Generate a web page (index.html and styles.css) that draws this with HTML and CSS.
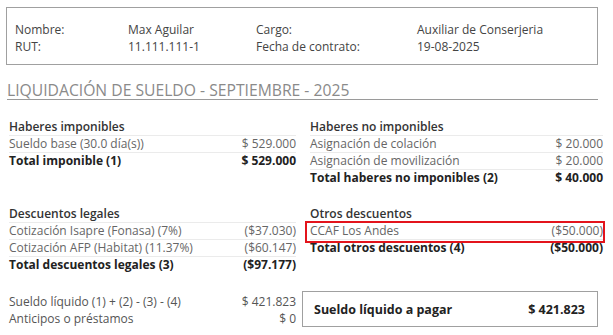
FILE: index.html
```html
<!DOCTYPE html>
<html lang="es">
<head>
<meta charset="utf-8">
<link rel="stylesheet" href="styles.css">
</head>
<body>
<div class="page">
  <div class="info">
    <div class="info-row">
      <span class="c1">Nombre:</span><span class="c2">Max Aguilar</span><span class="c3">Cargo:</span><span class="c4">Auxiliar de Conserjeria</span>
    </div>
    <div class="info-row">
      <span class="c1">RUT:</span><span class="c2">11.111.111-1</span><span class="c3">Fecha de contrato:</span><span class="c4">19-08-2025</span>
    </div>
  </div>

  <h1 class="title">LIQUIDACIÓN DE SUELDO - SEPTIEMBRE - 2025</h1>

  <div class="grid">
    <div class="block">
      <div class="row head">Haberes imponibles</div>
      <div class="row item"><span>Sueldo base (30.0 día(s))</span><span>$ 529.000</span></div>
      <div class="row total"><span>Total imponible (1)</span><span>$ 529.000</span></div>
    </div>
    <div class="block">
      <div class="row head">Haberes no imponibles</div>
      <div class="row item"><span>Asignación de colación</span><span>$ 20.000</span></div>
      <div class="row item"><span>Asignación de movilización</span><span>$ 20.000</span></div>
      <div class="row total"><span>Total haberes no imponibles (2)</span><span>$ 40.000</span></div>
    </div>
    <div class="block">
      <div class="row head">Descuentos legales</div>
      <div class="row item"><span>Cotización Isapre (Fonasa) (7%)</span><span>($37.030)</span></div>
      <div class="row item"><span>Cotización AFP (Habitat) (11.37%)</span><span>($60.147)</span></div>
      <div class="row total"><span>Total descuentos legales (3)</span><span>($97.177)</span></div>
    </div>
    <div class="block">
      <div class="row head">Otros descuentos</div>
      <div class="row item marked"><span>CCAF Los Andes</span><span>($50.000)</span><i class="mark"></i></div>
      <div class="row total"><span>Total otros descuentos (4)</span><span>($50.000)</span></div>
    </div>
  </div>

  <div class="bottom">
    <div class="summary">
      <div class="row plain"><span>Sueldo líquido (1) + (2) - (3) - (4)</span><span>$ 421.823</span></div>
      <div class="row plain"><span>Anticipos o préstamos</span><span>$ 0</span></div>
    </div>
    <div class="pay">
      <span>Sueldo líquido a pagar</span><span>$ 421.823</span>
    </div>
  </div>
</div>
</body>
</html>
```

FILE: styles.css
```css
* { box-sizing: border-box; }
html, body { margin: 0; padding: 0; background: #fff; }
body {
  font-family: "Open Sans", "Liberation Sans", sans-serif;
  font-size: 12px;
  color: #555;
}
.page { width: 613px; padding-top: 7px; }

.info {
  margin-left: 6px;
  width: 592px;
  border: 1px solid #a0a0a0;
  padding: 13px 0 9px 8px;
}
.info-row { display: flex; height: 17px; line-height: 17px; color: #444; }
.c1 { width: 113px; }
.c2 { width: 128px; }
.c3 { width: 161px; }

.title {
  margin: 16px 0 0 7px;
  width: 591px;
  font-size: 15.7px;
  font-weight: 400;
  line-height: 18px;
  color: #8a8a8a;
  padding-bottom: 0;
  border-bottom: 1px solid #9a9a9a;
}

.grid {
  display: grid;
  grid-template-columns: 287px 293px;
  column-gap: 14px;
  row-gap: 19px;
  padding-left: 9px;
  margin-top: 19px;
  align-items: start;
}
.row {
  display: flex;
  justify-content: space-between;
  height: 17px;
  line-height: 16px;
}
.head, .item { border-bottom: 1px solid #ebebeb; }
.head { font-weight: 600; color: #333; }
.item { color: #666; }
.total { font-weight: 700; color: #222; }
.marked { position: relative; }
.mark {
  position: absolute;
  left: -5px; right: -2px; top: -2px; bottom: -4px;
  border: 2px solid #e3141c;
}

.bottom {
  display: grid;
  grid-template-columns: 287px 296px;
  column-gap: 6px;
  padding-left: 9px;
  margin-top: 17px;
  align-items: start;
}
.summary { padding-top: 3px; }
.plain { color: #555; }
.pay {
  display: flex;
  justify-content: space-between;
  align-items: center;
  height: 36px;
  border: 1px solid #a0a0a0;
  padding: 0 12px 0 11px;
  font-weight: 700;
  color: #222;
  font-size: 12.5px;
}
```
